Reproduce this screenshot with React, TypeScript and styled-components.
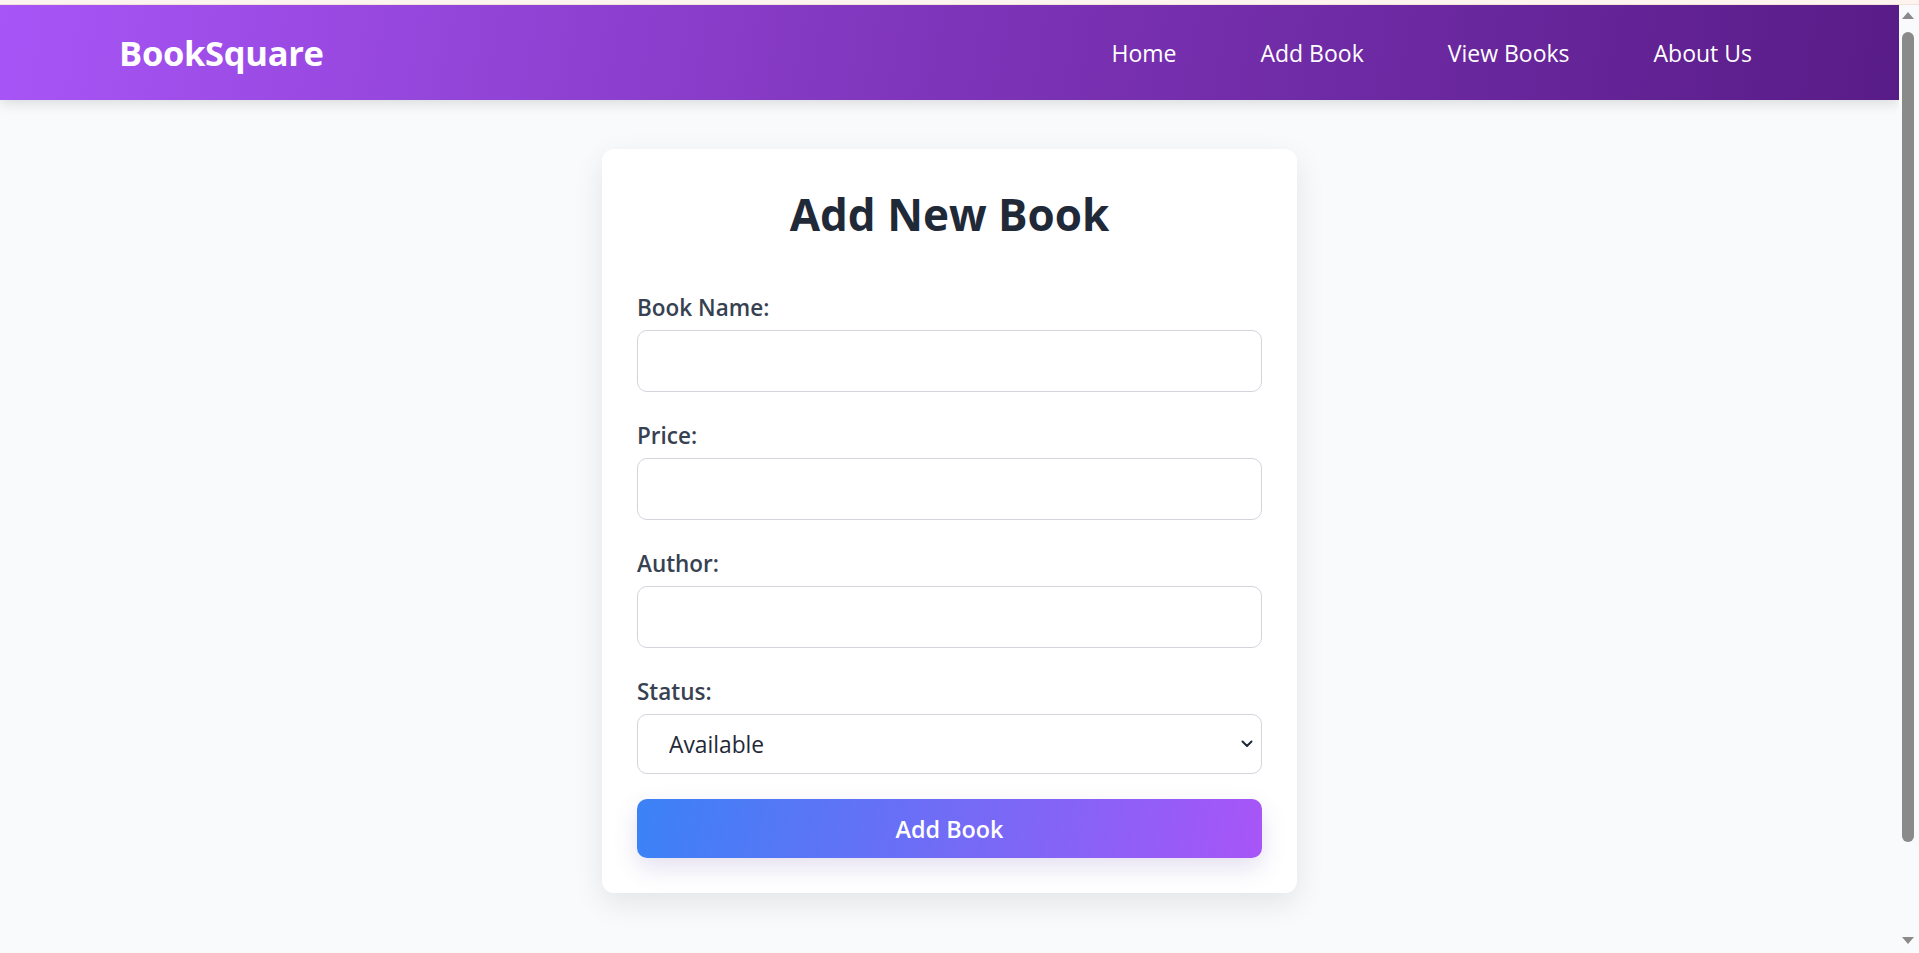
import React from "react";
import styled, { createGlobalStyle } from "styled-components";

const GlobalStyle = createGlobalStyle`
  * { box-sizing: border-box; }
  html, body { margin: 0; padding: 0; height: 100%; overflow: hidden; }
  body {
    background: #f9fafb;
    font-family: "Open Sans", "Noto Sans", sans-serif;
    color: #1f2937;
  }
`;

const Frame = styled.div`
  display: flex;
  flex-direction: column;
  height: 100vh;
`;

const TopStrip = styled.div`
  flex: 0 0 5px;
  background: #fdf4f0;
  border-bottom: 1px solid #f2e2dc;
`;

const Shell = styled.div`
  flex: 1;
  display: flex;
  min-height: 0;
`;

const Viewport = styled.div`
  flex: 1;
  overflow-y: auto;
  scrollbar-width: none;
  &::-webkit-scrollbar { display: none; }
`;

const Rail = styled.div`
  flex: 0 0 20px;
  display: flex;
  flex-direction: column;
  align-items: center;
  padding: 7px 4px 9px 2px;
  background: #f9fafb;
`;

const Arrow = styled.div<{ $down?: boolean }>`
  width: 0;
  height: 0;
  border-left: 6px solid transparent;
  border-right: 6px solid transparent;
  ${(p) =>
    p.$down
      ? "border-top: 7px solid #8a8a8a; margin-top: auto;"
      : "border-bottom: 7px solid #8a8a8a;"}
`;

const Thumb = styled.div`
  width: 12px;
  height: 810px;
  margin-top: 13px;
  border-radius: 6px;
  background: #8a8a8a;
`;

const Header = styled.header`
  height: 95px;
  display: flex;
  align-items: center;
  justify-content: space-between;
  padding: 0 131px 0 119px;
  background: linear-gradient(100deg, #a855f7 0%, #7e34b9 50%, #581c87 100%);
  box-shadow: 0 4px 12px rgba(0, 0, 0, 0.12);
  position: relative;
  z-index: 1;
`;

const Logo = styled.div`
  color: #ffffff;
  font-size: 34.5px;
  font-weight: 700;
  letter-spacing: -0.3px;
`;

const Nav = styled.nav`
  display: flex;
  align-items: center;
  gap: 52px;
`;

const NavLink = styled.a`
  color: #ffffff;
  text-decoration: none;
  font-size: 23px;
  padding: 10px 16px;
  cursor: pointer;
`;

const Main = styled.main`
  min-height: 995px;
  padding: 49px 0 60px;
  display: flex;
  justify-content: center;
  align-items: flex-start;
`;

const Card = styled.section`
  width: 695px;
  background: #ffffff;
  border-radius: 12px;
  box-shadow: 0 10px 30px rgba(0, 0, 0, 0.09);
  padding: 36px 35px 35px;
`;

const Title = styled.h2`
  margin: 2px 0 51px;
  text-align: center;
  font-size: 44px;
  line-height: 54px;
  font-weight: 700;
  color: #1f2937;
`;

const Form = styled.form`
  display: flex;
  flex-direction: column;
`;

const Group = styled.div<{ $last?: boolean }>`
  display: flex;
  flex-direction: column;
  gap: 7px;
  margin-bottom: ${(p) => (p.$last ? "25px" : "28px")};
`;

const Label = styled.label`
  font-size: 22.5px;
  line-height: 31px;
  font-weight: 600;
  color: #374151;
`;

const Input = styled.input`
  height: 62px;
  width: 100%;
  padding: 0 24px;
  font-family: inherit;
  font-size: 22px;
  color: #1f2937;
  border: 1px solid #d1d5db;
  border-radius: 10px;
  background: #ffffff;
  outline: none;
`;

const SelectWrap = styled.div`
  position: relative;
`;

const Select = styled.select`
  display: block;
  appearance: none;
  height: 60px;
  width: 100%;
  padding: 0 40px 0 31px;
  font-family: inherit;
  font-size: 22.8px;
  color: #1f2937;
  border: 1px solid #d1d5db;
  border-radius: 10px;
  background: #ffffff;
  outline: none;
`;

const Chevron = styled.svg`
  position: absolute;
  right: 9px;
  top: 50%;
  transform: translateY(-50%);
  pointer-events: none;
`;

const Button = styled.button`
  height: 59px;
  width: 100%;
  border: none;
  border-radius: 10px;
  background: linear-gradient(100deg, #3b82f6 0%, #a855f7 100%);
  color: #ffffff;
  font-family: inherit;
  font-size: 23.4px;
  font-weight: 600;
  cursor: pointer;
  box-shadow: 0 10px 24px rgba(88, 60, 160, 0.16);
`;

export default function App() {
  return (
    <>
      <GlobalStyle />
      <Frame>
        <TopStrip />
        <Shell>
          <Viewport>
            <Header>
              <Logo>BookSquare</Logo>
              <Nav>
                <NavLink>Home</NavLink>
                <NavLink>Add Book</NavLink>
                <NavLink>View Books</NavLink>
                <NavLink>About Us</NavLink>
              </Nav>
            </Header>
            <Main>
              <Card>
                <Title>Add New Book</Title>
                <Form onSubmit={(e) => e.preventDefault()}>
                  <Group>
                    <Label htmlFor="name">Book Name:</Label>
                    <Input id="name" type="text" />
                  </Group>
                  <Group>
                    <Label htmlFor="price">Price:</Label>
                    <Input id="price" type="text" />
                  </Group>
                  <Group>
                    <Label htmlFor="author">Author:</Label>
                    <Input id="author" type="text" />
                  </Group>
                  <Group $last>
                    <Label htmlFor="status">Status:</Label>
                    <SelectWrap>
                      <Select id="status" defaultValue="Available">
                        <option>Available</option>
                        <option>Not Available</option>
                      </Select>
                      <Chevron width="12" height="8" viewBox="0 0 12 8">
                        <path
                          d="M1.5 1.5 L6 6 L10.5 1.5"
                          fill="none"
                          stroke="#1f2937"
                          strokeWidth="2"
                          strokeLinecap="round"
                          strokeLinejoin="round"
                        />
                      </Chevron>
                    </SelectWrap>
                  </Group>
                  <Button type="submit">Add Book</Button>
                </Form>
              </Card>
            </Main>
          </Viewport>
          <Rail>
            <Arrow />
            <Thumb />
            <Arrow $down />
          </Rail>
        </Shell>
      </Frame>
    </>
  );
}
